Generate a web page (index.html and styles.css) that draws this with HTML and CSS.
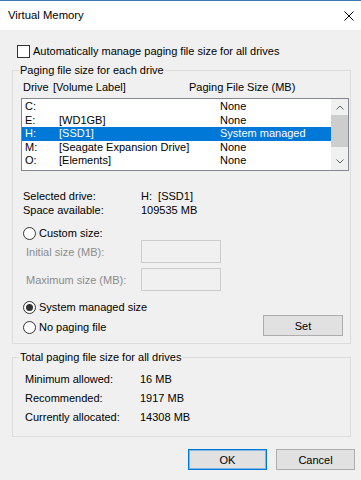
FILE: index.html
```html
<!DOCTYPE html>
<html lang="en">
<head>
    <meta charset="UTF-8">
    <meta name="viewport" content="width=device-width, initial-scale=1.0">
    <title>Virtual Memory</title>
    <link rel="stylesheet" href="styles.css">
</head>
<body>

<div class="window">
    <div class="titlebar">
        <span class="title">Virtual Memory</span>
        <svg class="close" width="10" height="10" viewBox="0 0 10 10">
            <path d="M0.5 0.5 L9.5 9.5 M9.5 0.5 L0.5 9.5" stroke="#000" stroke-width="1" fill="none"/>
        </svg>
    </div>

    <div class="dialog">
        <label class="check-row"><span class="checkbox"></span>Automatically manage paging file size for all drives</label>

        <fieldset class="group drives">
            <legend>Paging file size for each drive</legend>
            <div class="list-head">
                <span class="h-drive">Drive</span>
                <span class="h-label">[Volume Label]</span>
                <span>Paging File Size (MB)</span>
            </div>
            <div class="listbox">
                <div class="rows">
                    <div class="row"><span class="c-drive">C:</span><span class="c-label"></span><span>None</span></div>
                    <div class="row"><span class="c-drive">E:</span><span class="c-label">[WD1GB]</span><span>None</span></div>
                    <div class="row selected"><span class="c-drive">H:</span><span class="c-label">[SSD1]</span><span>System managed</span></div>
                    <div class="row"><span class="c-drive">M:</span><span class="c-label">[Seagate Expansion Drive]</span><span>None</span></div>
                    <div class="row"><span class="c-drive">O:</span><span class="c-label">[Elements]</span><span>None</span></div>
                </div>
                <div class="scrollbar">
                    <span class="arrow">
                        <svg width="8" height="5" viewBox="0 0 8 5"><path d="M0.5 4.5 L4 1 L7.5 4.5" stroke="#606060" fill="none"/></svg>
                    </span>
                    <span class="track"><span class="thumb"></span></span>
                    <span class="arrow">
                        <svg width="8" height="5" viewBox="0 0 8 5"><path d="M0.5 0.5 L4 4 L7.5 0.5" stroke="#606060" fill="none"/></svg>
                    </span>
                </div>
            </div>

            <div class="info">
                <div class="info-row"><span class="key">Selected drive:</span><span>H:&nbsp; [SSD1]</span></div>
                <div class="info-row"><span class="key">Space available:</span><span>109535 MB</span></div>
            </div>

            <label class="radio-row custom"><span class="radio"></span>Custom size:</label>
            <div class="field-row"><span class="key">Initial size (MB):</span><span class="input"></span></div>
            <div class="field-row second"><span class="key">Maximum size (MB):</span><span class="input"></span></div>
            <label class="radio-row managed"><span class="radio on"></span>System managed size</label>
            <div class="last-row">
                <label class="radio-row"><span class="radio"></span>No paging file</label>
                <button class="btn set">Set</button>
            </div>
        </fieldset>

        <fieldset class="group totals">
            <legend>Total paging file size for all drives</legend>
            <div class="total-row"><span class="key">Minimum allowed:</span><span>16 MB</span></div>
            <div class="total-row"><span class="key">Recommended:</span><span>1917 MB</span></div>
            <div class="total-row"><span class="key">Currently allocated:</span><span>14308 MB</span></div>
        </fieldset>

        <div class="actions">
            <button class="btn default">OK</button>
            <button class="btn">Cancel</button>
        </div>
    </div>
</div>

</body>
</html>
```

FILE: styles.css
```css
* {
    box-sizing: border-box;
}
body {
    margin: 0;
    background: #f0f0f0;
    font-family: "Liberation Sans", Arial, sans-serif;
    font-size: 11px;
    color: #000;
}
.window {
    width: 361px;
    height: 480px;
    overflow: hidden;
}
.titlebar {
    height: 30px;
    background: #fff;
    border-top: 1px solid #3f7ab7;
    display: flex;
    align-items: center;
    justify-content: space-between;
    padding: 0 7px 1px 8px;
}
.title {
    font-size: 11.3px;
}
.close {
    display: block;
    margin-top: 1px;
}
.dialog {
    padding-left: 12px;
}
.check-row {
    display: flex;
    align-items: center;
    height: 13px;
    margin-top: 15px;
    padding-left: 5px;
    line-height: 13px;
}
.checkbox {
    width: 13px;
    height: 13px;
    border: 1px solid #333;
    background: #fff;
    margin-right: 3px;
    flex: none;
}

/* group boxes */
.group {
    margin: 0 10px 0 0;
    border: 1px solid #dcdcdc;
    padding: 0 1px 0 8px;
    min-width: 0;
}
.group legend {
    line-height: 16px;
    padding: 0 1px;
    margin-left: -2px;
}
.drives {
    margin-top: 4px;
    padding-top: 2px;
    padding-bottom: 7px;
}
.list-head {
    display: flex;
    line-height: 14px;
    padding-left: 2px;
}
.h-drive {
    width: 30px;
}
.h-label {
    width: 136px;
}

/* list box */
.listbox {
    margin-top: 4px;
    height: 73px;
    border: 1px solid #828790;
    background: #fff;
    display: flex;
}
.rows {
    flex: 1;
    padding-top: 1px;
}
.row {
    display: flex;
    height: 13.5px;
    line-height: 13.5px;
    padding-left: 3px;
}
.row.selected {
    background: #0078d7;
    color: #fff;
}
.c-drive {
    width: 34px;
}
.c-label {
    width: 161px;
}
.scrollbar {
    width: 17px;
    background: #f0f0f0;
    display: flex;
    flex-direction: column;
}
.arrow {
    height: 17px;
    display: flex;
    align-items: center;
    justify-content: center;
}
.arrow svg {
    display: block;
}
.track {
    flex: 1;
    padding: 0 0 0 0;
}
.thumb {
    display: block;
    height: 32px;
    margin: -1px 0 0 0;
    background: #cdcdcd;
}

/* selected drive info */
.info {
    margin-top: 18px;
    padding-left: 2px;
}
.info-row {
    display: flex;
    line-height: 14px;
}
.info-row .key {
    width: 118px;
}
.radio-row {
    display: flex;
    align-items: center;
    height: 14px;
    padding-left: 2px;
}
.radio {
    width: 13px;
    height: 13px;
    border: 1px solid #333;
    border-radius: 50%;
    background: #fff;
    margin-right: 3px;
    flex: none;
    display: flex;
    align-items: center;
    justify-content: center;
}
.radio.on::after {
    content: "";
    width: 7px;
    height: 7px;
    border-radius: 50%;
    background: #333;
}
.custom {
    margin-top: 9px;
}
.field-row {
    display: flex;
    align-items: center;
    height: 23px;
    padding-left: 5px;
    color: #8c8c8c;
}
.field-row.second {
    margin-top: 5px;
}
.field-row .key {
    width: 115px;
}
.input {
    width: 80px;
    height: 23px;
    border: 1px solid #cccccc;
    background: #f0f0f0;
}
.managed {
    margin-top: 9px;
}
.last-row {
    display: flex;
    align-items: center;
    justify-content: space-between;
    height: 21px;
    margin-top: 1px;
}
.last-row .radio-row {
    margin-top: 3px;
}

/* buttons */
.btn {
    font: inherit;
    color: #000;
    width: 79px;
    height: 21px;
    padding: 0;
    background: #e1e1e1;
    border: 1px solid #adadad;
}
.btn.set {
    width: 80px;
    margin-right: 6px;
}
.btn.default {
    border-color: #0078d7;
    box-shadow: inset 0 0 0 1px #7fb6e4;
}

/* totals */
.totals {
    margin-top: 5px;
    padding-top: 5px;
    padding-bottom: 9px;
}
.total-row {
    display: flex;
    line-height: 19px;
    padding-left: 4px;
}
.total-row .key {
    width: 115px;
}
.actions {
    display: flex;
    justify-content: flex-end;
    gap: 9px;
    margin-top: 12px;
    padding-right: 6px;
}
```
